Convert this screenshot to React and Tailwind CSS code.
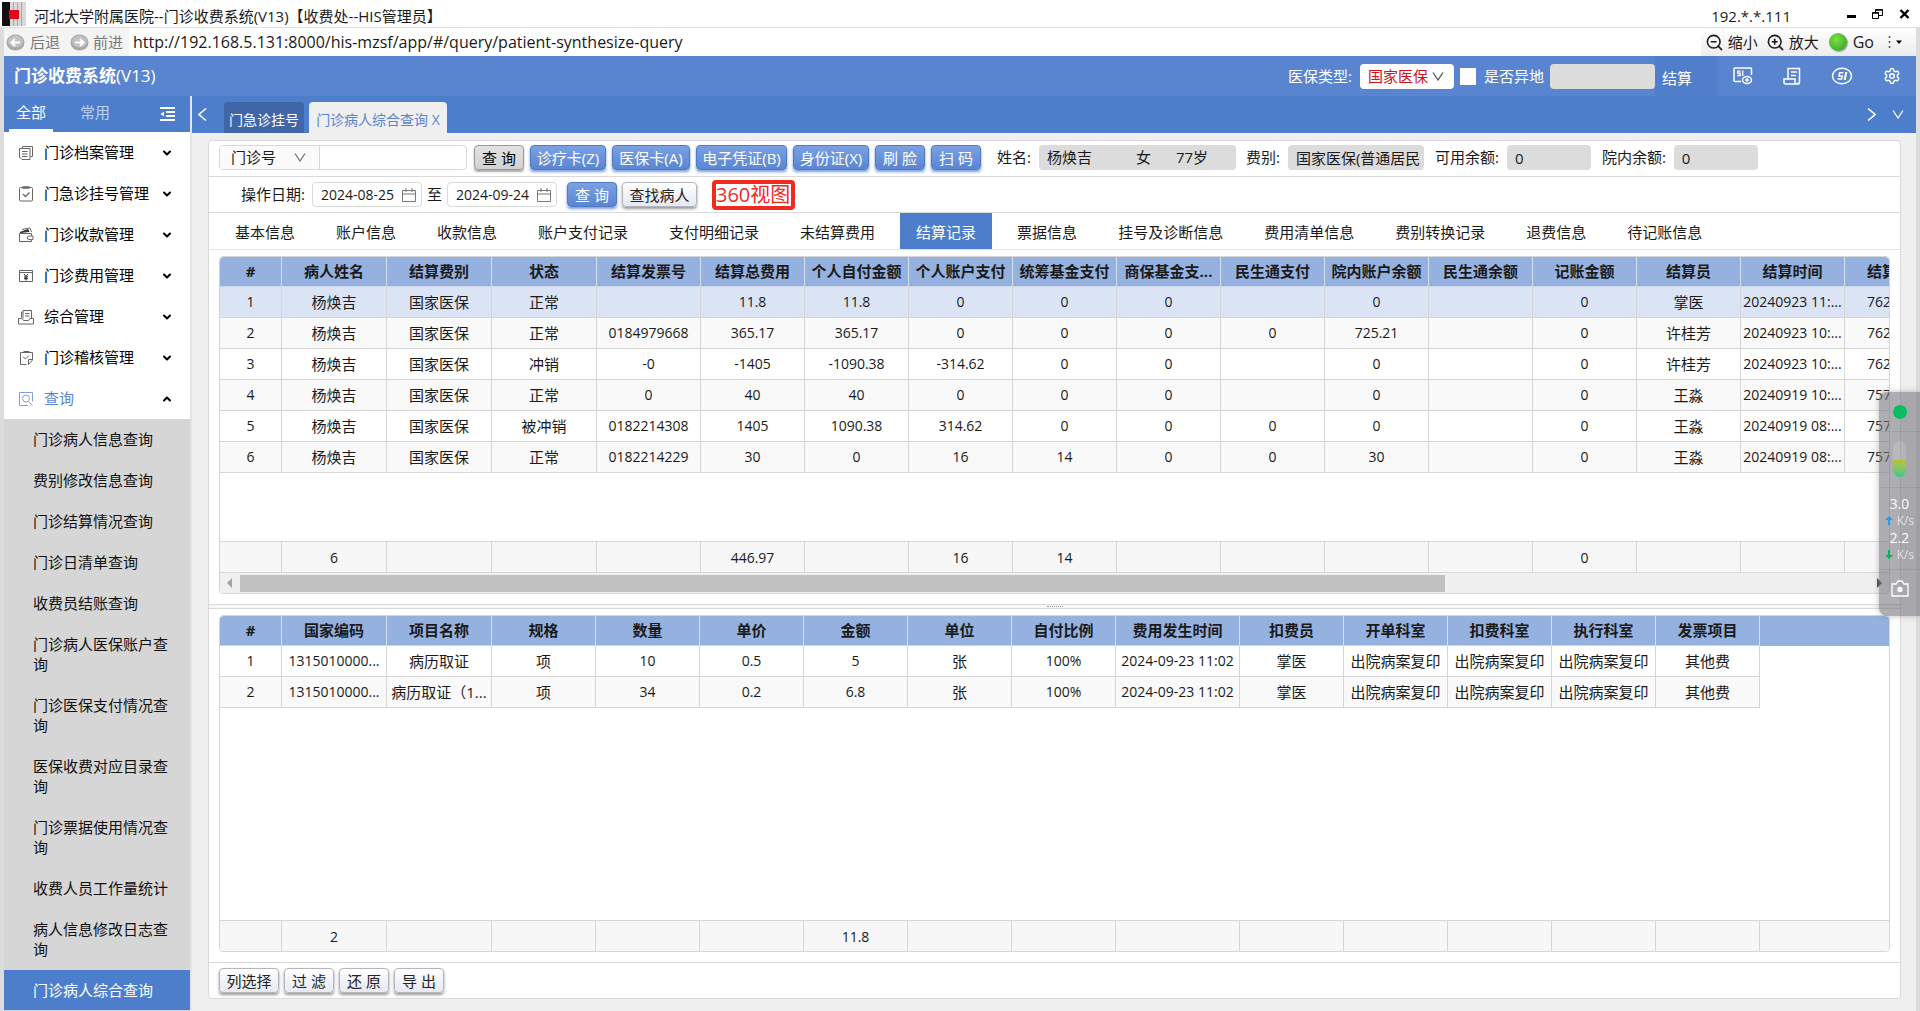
import React, { useState } from 'react';
import clsx from 'clsx';
import { ChevronDown, ChevronUp, Settings, ZoomIn, ZoomOut } from 'lucide-react';

const MENU = [
    { label: '门诊档案管理', icon: DocsIcon },
    { label: '门急诊挂号管理', icon: ClipboardIcon },
    { label: '门诊收款管理', icon: WalletIcon },
    { label: '门诊费用管理', icon: FeeIcon },
    { label: '综合管理', icon: TrayIcon },
    { label: '门诊稽核管理', icon: AuditIcon },
    { label: '查询', icon: QueryIcon, open: true },
];

const SUBMENU = [
    '门诊病人信息查询',
    '费别修改信息查询',
    '门诊结算情况查询',
    '门诊日清单查询',
    '收费员结账查询',
    '门诊病人医保账户查询',
    '门诊医保支付情况查询',
    '医保收费对应目录查询',
    '门诊票据使用情况查询',
    '收费人员工作量统计',
    '病人信息修改日志查询',
    '门诊病人综合查询',
];

const TABS = [
    '基本信息', '账户信息', '收款信息', '账户支付记录', '支付明细记录', '未结算费用', '结算记录',
    '票据信息', '挂号及诊断信息', '费用清单信息', '费别转换记录', '退费信息', '待记账信息',
];

const SETTLE_WIDTHS = [62, 105, 105, 105, 104, 104, 104, 104, 104, 104, 104, 104, 104, 104, 104, 104, 104];
const SETTLE_HEAD = [
    '#', '病人姓名', '结算费别', '状态', '结算发票号', '结算总费用', '个人自付金额', '个人账户支付', '统筹基金支付',
    '商保基金支...', '民生通支付', '院内账户余额', '民生通余额', '记账金额', '结算员', '结算时间', '结算',
];
const SETTLE_ROWS = [
    ['1', '杨焕吉', '国家医保', '正常', '', '11.8', '11.8', '0', '0', '0', '', '0', '', '0', '掌医', '20240923 11:...', '762'],
    ['2', '杨焕吉', '国家医保', '正常', '0184979668', '365.17', '365.17', '0', '0', '0', '0', '725.21', '', '0', '许桂芳', '20240923 10:...', '762'],
    ['3', '杨焕吉', '国家医保', '冲销', '-0', '-1405', '-1090.38', '-314.62', '0', '0', '', '0', '', '0', '许桂芳', '20240923 10:...', '762'],
    ['4', '杨焕吉', '国家医保', '正常', '0', '40', '40', '0', '0', '0', '', '0', '', '0', '王淼', '20240919 10:...', '757'],
    ['5', '杨焕吉', '国家医保', '被冲销', '0182214308', '1405', '1090.38', '314.62', '0', '0', '0', '0', '', '0', '王淼', '20240919 08:...', '757'],
    ['6', '杨焕吉', '国家医保', '正常', '0182214229', '30', '0', '16', '14', '0', '0', '30', '', '0', '王淼', '20240919 08:...', '757'],
];
const SETTLE_TOTAL = ['', '6', '', '', '', '446.97', '', '16', '14', '', '', '', '', '0', '', '', ''];

const DETAIL_WIDTHS = [62, 105, 105, 104, 104, 104, 104, 104, 104, 124, 104, 104, 104, 104, 104];
const DETAIL_HEAD = [
    '#', '国家编码', '项目名称', '规格', '数量', '单价', '金额', '单位', '自付比例', '费用发生时间', '扣费员',
    '开单科室', '扣费科室', '执行科室', '发票项目',
];
const DETAIL_ROWS = [
    ['1', '1315010000...', '病历取证', '项', '10', '0.5', '5', '张', '100%', '2024-09-23 11:02', '掌医', '出院病案复印', '出院病案复印', '出院病案复印', '其他费'],
    ['2', '1315010000...', '病历取证（1...', '项', '34', '0.2', '6.8', '张', '100%', '2024-09-23 11:02', '掌医', '出院病案复印', '出院病案复印', '出院病案复印', '其他费'],
];
const DETAIL_TOTAL = ['', '2', '', '', '', '', '11.8', '', '', '', '', '', '', '', ''];

/* ---------- sidebar icons ---------- */

function MenuSvg({ children }) {
    return (
        <svg width="16" height="16" viewBox="0 0 16 16" fill="none" stroke="currentColor" strokeWidth="1" className="shrink-0">
            {children}
        </svg>
    );
}

function DocsIcon() {
    return (
        <MenuSvg>
            <path d="M4.5 3.5v-2h10v10h-2M1.5 3.5h10.500v11h-8l-2.500-2.500zM4 6.500h5.500M4 9h5.500M4 11.500h5.500" />
        </MenuSvg>
    );
}

function ClipboardIcon() {
    return (
        <MenuSvg>
            <rect x="1.500" y="1.500" width="13" height="13.500" rx="1" />
            <path d="M4.500 1.500h7" strokeWidth="2.500" />
            <path d="M5 8l2.500 2.500L11.500 6.500" strokeWidth="1.300" />
        </MenuSvg>
    );
}

function WalletIcon() {
    return (
        <MenuSvg>
            <path d="M2 5.500L10 2.500l1 2z" fill="#333" stroke="#333" />
            <path d="M4 2.500l8-1.500 1.500 4" />
            <path d="M1.500 6.500h12v2.500h-2.500a1.500 1.500 0 0 0 0 3.500h2.500v2h-12z" />
            <path d="M13.500 9h1.500v3.500h-1.500" />
        </MenuSvg>
    );
}

function FeeIcon() {
    return (
        <MenuSvg>
            <path d="M1.500 2.500h13v11h-13zM1.500 4.500h13" />
            <path d="M6 6l2 2.500L10 6M8 8.500v4M6 9h4M6 10.700h4" stroke="#222" />
        </MenuSvg>
    );
}

function TrayIcon() {
    return (
        <MenuSvg>
            <path d="M3.500 8.500v-5.500h1.500M5 9.500v-8h8.500v8M7 4.500h4.500M7 7h4.500M.5 9.500h3.500l1.500 2h5l1.500-2h3.500v5.500h-15z" />
        </MenuSvg>
    );
}

function AuditIcon() {
    return (
        <MenuSvg>
            <path d="M8.500 14.500h-6v-12h12v7.500l-4 4.500M14.500 9.500h-4v5" />
            <path d="M5.500 2h6" strokeWidth="2" />
            <path d="M5 6.500l2.500 2.500L11 5.500" />
        </MenuSvg>
    );
}

function QueryIcon() {
    return (
        <MenuSvg>
            <path d="M10 14.500h-8.500v-13h13v9" />
            <circle cx="8" cy="7.500" r="3.500" />
            <path d="M10.500 10.500l4 4" />
        </MenuSvg>
    );
}

/* ---------- top bar icons ---------- */

function CardEyeIcon() {
    return (
        <svg width="20" height="18" viewBox="0 0 20 18" fill="none" stroke="currentColor" strokeWidth="1.500">
            <path d="M8 14.500H2a1 1 0 0 1-1-1V2a1 1 0 0 1 1-1h15.500a1 1 0 0 1 1 1v6" />
            <path d="M7.500 4.200H4.700v2h2.500v2.300H4.200M9.700 3.500v5.500" strokeWidth="1.300" />
            <ellipse cx="14" cy="13" rx="4.500" ry="3.500" />
            <circle cx="14" cy="13" r="1" />
        </svg>
    );
}

function ReceiptIcon() {
    return (
        <svg width="18" height="18" viewBox="0 0 18 18" fill="none" stroke="currentColor" strokeWidth="1.500">
            <path d="M5 11.500V1.500h11.500v14a1.500 1.500 0 0 1-1.500 1.500H2.500a1.500 1.500 0 0 1-1.500-1.500v-3.500h11v3.500a1.500 1.500 0 0 0 3 0M8 5h6M8 8.500h5" />
        </svg>
    );
}

function SiIcon() {
    return (
        <svg width="22" height="18" viewBox="0 0 22 18" fill="none" stroke="currentColor" strokeWidth="1.500">
            <ellipse cx="11" cy="9" rx="9.500" ry="7.800" />
            <path d="M12.300 5.800H8.700L8 8.900h3.300l-.7 3.200H6.500" />
            <path d="M15.300 5l-1.600 8" strokeWidth="2" />
        </svg>
    );
}

function Caret({ className }) {
    return (
        <svg width="12" height="9" viewBox="0 0 12 9" fill="none" stroke="currentColor" strokeWidth="1.300" className={className}>
            <path d="M1 .5l5 7.500L11 .5" />
        </svg>
    );
}

function SideArrow({ left }) {
    return (
        <svg width="9" height="13" viewBox="0 0 9 13" fill="none" stroke="currentColor" strokeWidth="1.500">
            <path d={left ? 'M8 .5L1 6.500l7 6' : 'M1 .5l7 6-7 6'} />
        </svg>
    );
}

function NavArrow({ back }) {
    return (
        <svg width="19" height="17" viewBox="0 0 19 17" className="shrink-0">
            <ellipse cx="9.500" cy="8.500" rx="9" ry="8" fill="#a8a8a8" />
            <ellipse cx="9.500" cy="7.500" rx="7.500" ry="6" fill="#c2c2c2" />
            <path
                d={back ? 'M14 8.500H5.500M9 5L5.500 8.500L9 12' : 'M5 8.500h8.500M10 5l3.500 3.500L10 12'}
                fill="none"
                stroke="#fff"
                strokeWidth="2"
            />
        </svg>
    );
}

function CalendarIcon() {
    return (
        <svg width="14" height="14" viewBox="0 0 14 14" fill="none" stroke="#777" strokeWidth="1" className="shrink-0">
            <path d="M.5 2.500h13v11H.5zM.5 6h13M4 0v4M10 0v4" />
        </svg>
    );
}

/* ---------- window chrome ---------- */

function TitleBar() {
    return (
        <div className="flex h-7 items-center border-b border-[#e0e0e0] pr-2.5 pl-0.5">
            <svg width="24" height="24" viewBox="0 0 24 24" className="shrink-0">
                <rect width="24" height="24" fill="#d8d8d8" />
                <rect width="8" height="24" fill="#111" />
                <path d="M11.500 0v24M15.500 0v24M19.500 0v24" stroke="#a8a8a8" />
                <rect x="7" y="8" width="10" height="9" fill="#e0061c" />
            </svg>
            <h1 className="ml-2 pt-1 text-[15px] leading-5">河北大学附属医院--门诊收费系统(V13)【收费处--HIS管理员】</h1>
            <span className="mr-14 ml-auto pt-1 text-[15px] leading-5">192.*.*.111</span>
            <div className="flex items-center gap-4">
                <button type="button" aria-label="最小化">
                    <svg width="9" height="10" viewBox="0 0 9 10"><path d="M0 7.500h9" stroke="#000" strokeWidth="3" /></svg>
                </button>
                <button type="button" aria-label="还原窗口">
                    <svg width="11" height="10" viewBox="0 0 11 10" fill="none" stroke="#000">
                        <path d="M.5 3.500h6v6h-6zM3.500 3V.5h7v6H7" />
                        <path d="M.5 4h6M3.500 1h7" strokeWidth="1.500" />
                    </svg>
                </button>
                <button type="button" aria-label="关闭">
                    <svg width="11" height="10" viewBox="0 0 11 10"><path d="M1.500 1l8 8M9.500 1l-8 8" stroke="#000" strokeWidth="2.400" /></svg>
                </button>
            </div>
        </div>
    );
}

function AddressBar() {
    return (
        <div className="flex h-7 items-center text-[15px] leading-5">
            <div className="flex h-full items-center bg-[#f4f4f4] pr-1.5 pl-0.5 text-[#777]">
                <button type="button" className="flex items-center gap-[5px]"><NavArrow back />后退</button>
                <button type="button" className="ml-2.5 flex items-center gap-1"><NavArrow />前进</button>
            </div>
            <span className="pl-1 text-base leading-5">http://192.168.5.131:8000/his-mzsf/app/#/query/patient-synthesize-query</span>
            <div className="ml-auto flex h-full items-center bg-linear-to-b from-white to-[#ececec] pr-3 pl-1">
                <button type="button" className="flex items-center gap-1"><ZoomOut size={19} />缩小</button>
                <button type="button" className="ml-2 flex items-center gap-1"><ZoomIn size={19} />放大</button>
                <button type="button" className="ml-2.5 flex items-center gap-1.5">
                    <span className="size-[18px] rounded-full bg-radial-[at_40%_35%] from-[#7be04a] to-[#2c9a1c] shadow-[1px_1px_1px_#999]" />
                    <span className="text-base leading-5">Go</span>
                </button>
                <svg width="18" height="12" viewBox="0 0 18 12" className="ml-3">
                    <path d="M3.500 0v2M3.500 5v2M3.500 10v2" stroke="#555" strokeWidth="1.500" />
                    <path d="M10 4.500h6l-3 3.500z" />
                </svg>
            </div>
        </div>
    );
}

function AppHeader() {
    return (
        <header className="flex h-10 items-center bg-[#5985d0] pl-2.5 text-[15px] text-white">
            <h2 className="text-[17px] font-bold">门诊收费系统<span className="font-medium">(V13)</span></h2>
            <div className="ml-auto flex h-full items-center">
                <label htmlFor="insurance" className="mr-2">医保类型:</label>
                <span className="relative flex items-center">
                    <select id="insurance" className="h-[25px] w-[94px] appearance-none rounded bg-white pl-2 text-[15px] text-[#d0121b]">
                        <option>国家医保</option>
                    </select>
                    <Caret className="pointer-events-none absolute right-2.5 text-[#555]" />
                </span>
                <input id="remote" type="checkbox" className="ml-1.5 h-[17px] w-4 appearance-none bg-white" />
                <label htmlFor="remote" className="ml-2">是否异地</label>
                <input type="text" aria-label="异地编号" readOnly className="ml-1.5 h-[25px] w-[105px] rounded bg-[#dcdcdc]" />
                <button type="button" className="h-full w-[62px] bg-[#507eca] pt-1 pl-[7px] text-left">结算</button>
                <div className="flex items-center gap-[30px] pr-[15px] pl-4">
                    <button type="button" aria-label="医保卡"><CardEyeIcon /></button>
                    <button type="button" aria-label="票据"><ReceiptIcon /></button>
                    <button type="button" aria-label="医保"><SiIcon /></button>
                    <button type="button" aria-label="设置"><Settings size={18} strokeWidth={2} /></button>
                </div>
            </div>
        </header>
    );
}

/* ---------- sidebar ---------- */

function Sidebar() {
    const [active, setActive] = useState('门诊病人综合查询');

    return (
        <nav className="flex w-[188px] shrink-0 flex-col border-r-2 border-[#e4e4e4] bg-white text-[15px]">
            <div className="flex h-9 items-stretch bg-[#4d7ecc] text-white">
                <button type="button" className="ml-[5px] w-11 border-b-3 border-white">全部</button>
                <button type="button" className="ml-5 w-11 border-b-3 border-transparent text-[#bcd2f5]">常用</button>
                <button type="button" aria-label="收起菜单" className="mr-3.5 ml-auto">
                    <svg width="16" height="14" viewBox="0 0 16 14" fill="none" stroke="#fff" strokeWidth="2">
                        <path d="M0 1h15M6 5h9M6 9h9M0 13h15" />
                        <path d="M4 4.500v5L.5 7z" fill="#fff" stroke="none" />
                    </svg>
                </button>
            </div>

            <ul>
                {MENU.map(({ label, icon: Icon, open }) => (
                    <li key={label}>
                        <button type="button" className={clsx('flex h-[41px] w-full items-center pr-[17px] pl-3.5', open ? 'text-[#5b84cf]' : 'text-black')}>
                            <span className={open ? 'text-[#7f9fdc]' : 'text-[#666]'}><Icon /></span>
                            <span className="ml-2.5">{label}</span>
                            {open
                                ? <ChevronUp size={12} strokeWidth={4} className="ml-auto text-black" />
                                : <ChevronDown size={12} strokeWidth={4} className="ml-auto text-black" />}
                        </button>
                    </li>
                ))}
            </ul>

            <ul className="flex flex-1 flex-col gap-px bg-[#d6d6d6]">
                {SUBMENU.map((label) => (
                    <li key={label}>
                        <a
                            href="#"
                            onClick={() => setActive(label)}
                            className={clsx('block py-2.5 pr-5 pl-[29px] leading-5', active === label ? 'bg-[#4d7ecc] text-white' : 'text-[#111]')}
                        >
                            {label}
                        </a>
                    </li>
                ))}
            </ul>
        </nav>
    );
}

/* ---------- form bits ---------- */

const BUTTON_TONE = {
    blue: 'border-[#4f7ac4] from-[#7ba1e2] to-[#5a85d2] text-white shadow-[0_2px_3px_#7d9cd6]',
    gray: 'border-[#999] from-[#e2e2e2] to-[#d2d2d2] text-black shadow-[0_2px_2px_#aaa]',
    light: 'border-[#b4b4bc] from-white to-[#e6e8f2] text-[#222] shadow-[0_2px_3px_#999]',
};

function Button({ tone = 'blue', className, children }) {
    return (
        <button
            type="button"
            className={clsx('h-[25px] shrink-0 rounded border bg-linear-to-b text-center text-[15px] leading-5 whitespace-nowrap', BUTTON_TONE[tone], className)}
        >
            {children}
        </button>
    );
}

function ReadOnly({ id, label, value, className }) {
    return (
        <div className="flex shrink-0 items-center gap-2">
            <label htmlFor={id}>{label}:</label>
            <input id={id} type="text" readOnly value={value} className={clsx('h-[25px] rounded bg-[#dcdcdc] pl-2 text-[15px]', className)} />
        </div>
    );
}

function DateBox({ id, value }) {
    return (
        <span className="flex h-[25px] w-[110px] items-center rounded border border-[#d9d9d9] pr-[5px] pl-2">
            <input id={id} aria-label={id} type="text" defaultValue={value} className="w-0 flex-1 text-sm" />
            <CalendarIcon />
        </span>
    );
}

function SearchRows() {
    return (
        <>
            <div className="flex h-9 items-center overflow-hidden border-b border-[#d9d9d9] pb-0.5 pl-2.5">
                <div className="relative flex h-[25px] w-[248px] shrink-0 items-center overflow-hidden rounded border border-[#d9d9d9]">
                    <select aria-label="查询方式" className="h-full w-[100px] shrink-0 appearance-none border-r border-[#d9d9d9] bg-[#fafafa] pl-[11px]">
                        <option>门诊号</option>
                    </select>
                    <Caret className="pointer-events-none absolute left-[74px] text-[#777]" />
                    <input type="text" aria-label="查询内容" className="h-full w-0 flex-1 px-2" />
                </div>
                <div className="ml-[7px] flex gap-1.5">
                    <Button tone="gray" className="w-[50px]">查 询</Button>
                    <Button className="w-[76px]">诊疗卡(Z)</Button>
                    <Button className="w-[78px]">医保卡(A)</Button>
                    <Button className="w-[91px]">电子凭证(B)</Button>
                    <Button className="w-[76px]">身份证(X)</Button>
                    <Button className="w-[50px]">刷 脸</Button>
                    <Button className="w-[50px]">扫 码</Button>
                </div>
                <div className="ml-4 flex shrink-0 items-center gap-2">
                    <span>姓名:</span>
                    <div className="flex h-[25px] w-[197px] items-center rounded bg-[#dcdcdc] pl-2">
                        <span className="w-[89px]">杨焕吉</span>
                        <span className="w-10">女</span>
                        <span>77岁</span>
                    </div>
                </div>
                <div className="ml-2.5 flex gap-[11px]">
                    <ReadOnly id="feeType" label="费别" value="国家医保(普通居民" className="w-[136px]" />
                    <ReadOnly id="available" label="可用余额" value="0" className="w-[84px]" />
                    <ReadOnly id="inner" label="院内余额" value="0" className="w-[84px]" />
                </div>
            </div>

            <div className="flex h-9 items-center border-b border-[#d9d9d9] pl-8">
                <label htmlFor="开始日期" className="mr-[7px]">操作日期:</label>
                <DateBox id="开始日期" value="2024-08-25" />
                <span className="mx-[5px]">至</span>
                <DateBox id="结束日期" value="2024-09-24" />
                <Button className="ml-2.5 w-[50px]">查 询</Button>
                <Button tone="light" className="ml-[5px] w-[75px]">查找病人</Button>
                <a href="#" className="ml-[15px] flex h-[30px] w-[83px] items-center rounded border-4 border-[#f02a1d] text-xl leading-5 text-[#f02a1d]">
                    360视图
                </a>
            </div>
        </>
    );
}

function RecordTabs() {
    const [current, setCurrent] = useState('结算记录');

    return (
        <div className="flex h-[37px] gap-[9px] overflow-hidden border-b border-[#e2e2e2] pl-2.5">
            {TABS.map((tab) => (
                <button
                    key={tab}
                    type="button"
                    onClick={() => setCurrent(tab)}
                    className={clsx('h-full shrink-0 px-4 pt-0.5 whitespace-nowrap', current === tab && 'bg-[#4d7ecc] text-white')}
                >
                    {tab}
                </button>
            ))}
        </div>
    );
}

/* ---------- tables ---------- */

function Cols({ widths }) {
    return (
        <colgroup>
            {widths.map((w, i) => <col key={i} style={{ width: w }} />)}
        </colgroup>
    );
}

// Last column of the settlement grid runs past the viewport, so it is left aligned.
function cellAlign(i) {
    return i === 16 ? 'pl-[22px] text-left' : 'text-center';
}

function Grid({ widths, head, rows, selected, filler }) {
    const total = widths.reduce((a, b) => a + b, 0);

    return (
        <div className="overflow-hidden rounded-t bg-[#95b1df]">
            <table className="table-fixed border-separate border-spacing-0" style={{ width: total }}>
                <Cols widths={widths} />
                <thead>
                    <tr className="h-[30px]">
                        {head.map((h, i) => (
                            <th key={i} className={clsx('overflow-hidden border-r border-b border-[#d5dff0] border-b-[#c9d4e8] pb-0.5 text-[15px] leading-5 font-bold whitespace-nowrap', cellAlign(i))}>
                                {h}
                            </th>
                        ))}
                    </tr>
                </thead>
            </table>
            <div className={clsx('bg-white', filler)}>
                <table className="table-fixed border-separate border-spacing-0" style={{ width: total }}>
                    <Cols widths={widths} />
                    <tbody>
                        {rows.map((row, r) => (
                            <tr key={r} className={clsx('h-[31px]', selected === r ? 'bg-[#dae4f5]' : r % 2 ? 'bg-[#f9f9f9]' : 'bg-white')}>
                                {row.map((cell, i) => (
                                    <td
                                        key={i}
                                        className={clsx(
                                            'overflow-hidden border-r border-b border-[#d6d6d6] leading-5 whitespace-nowrap',
                                            /^[\d\s.:%-]*$/.test(cell) ? 'text-sm leading-5' : 'text-[15px]',
                                            cellAlign(i),
                                        )}
                                    >
                                        {cell}
                                    </td>
                                ))}
                            </tr>
                        ))}
                    </tbody>
                </table>
            </div>
        </div>
    );
}

function TotalRow({ widths, values }) {
    return (
        <div className="overflow-hidden border-t border-[#d6d6d6] bg-[#f7f7f7]">
            <table className="table-fixed border-separate border-spacing-0" style={{ width: widths.reduce((a, b) => a + b, 0) }}>
                <Cols widths={widths} />
                <tbody>
                    <tr className="h-[30px]">
                        {values.map((v, i) => (
                            <td key={i} className="border-r border-[#d6d6d6] pt-0.5 text-center text-sm leading-5">{v}</td>
                        ))}
                    </tr>
                </tbody>
            </table>
        </div>
    );
}

function ScrollBar() {
    return (
        <div className="flex h-[21px] items-center border-t border-[#d6d6d6] bg-[#f0f0f0]">
            <svg width="20" height="12" viewBox="0 0 20 12" className="shrink-0"><path d="M12 1v10L7 6z" fill="#a3a3a3" /></svg>
            <div className="flex h-[17px] flex-1">
                <div className="w-[74%] bg-[#c1c1c1]" />
            </div>
            <svg width="20" height="12" viewBox="0 0 20 12" className="shrink-0"><path d="M8 1v10l5-5z" fill="#444" /></svg>
        </div>
    );
}

/* ---------- floating network monitor ---------- */

function NetMonitor() {
    return (
        <aside className="fixed top-[392px] right-0 flex h-[224px] w-[41px] flex-col items-center rounded-l-lg bg-[#78787f]/60 text-white shadow-[0_0_6px_#8888]">
            <div className="flex h-10 w-full items-center justify-center border-b border-[#0001]">
                <span className="size-3.5 rounded-full bg-[#06bf63]" />
            </div>
            <div className="flex h-14 w-full items-end justify-center border-b border-[#0001] pb-2.5">
                <span className="flex h-9 w-[13px] items-end overflow-hidden rounded-full bg-[#fff2]">
                    <span className="h-[17px] w-full bg-linear-to-b from-[#b5c425] to-[#2fc88a]" />
                </span>
            </div>
            <div className="flex h-[82px] w-full flex-col items-center justify-center border-b border-[#0001] text-xs">
                <span className="text-sm leading-[17px]">3.0</span>
                <span className="flex items-center gap-1 leading-[17px] text-[#e2e2e2]">
                    <svg width="8" height="9" viewBox="0 0 8 9"><path d="M4 0l4 4H5v5H3V4H0z" fill="#1f9df0" /></svg>
                    K/s
                </span>
                <span className="text-sm leading-[17px]">2.2</span>
                <span className="flex items-center gap-1 leading-[17px] text-[#e2e2e2]">
                    <svg width="8" height="9" viewBox="0 0 8 9"><path d="M4 9l4-4H5V0H3v5H0z" fill="#08b35c" /></svg>
                    K/s
                </span>
            </div>
            <button type="button" aria-label="截图" className="mt-2.5">
                <svg width="18" height="17" viewBox="0 0 18 17" fill="none" stroke="#fff" strokeWidth="1.300">
                    <path d="M1 4h4l2-3h4l2 3h4v12H1z" />
                    <circle cx="9" cy="9.500" r="2" fill="#fff" />
                </svg>
            </button>
        </aside>
    );
}

export default function App() {
    return (
        <div className="flex min-h-screen flex-col bg-white font-['Open_Sans','Noto_Sans_CJK_SC',sans-serif] text-[15px] text-[#1a1a1a]">
            <TitleBar />
            <div className="flex flex-1 flex-col border-r-4 border-l-4 border-[#dcdcdc] bg-[#efefef]">
                <div className="bg-white"><AddressBar /></div>
                <AppHeader />
                <div className="flex flex-1">
                    <Sidebar />
                    <div className="flex min-w-0 flex-1 flex-col">
                        <div className="flex h-[37px] items-end bg-[#4d7ecc] text-white">
                            <button type="button" aria-label="向左" className="mb-3 ml-1.5"><SideArrow left /></button>
                            <button type="button" className="ml-[17px] h-[31px] w-20 rounded-t bg-[#3f66a8] pt-1 text-sm">门急诊挂号</button>
                            <button type="button" className="ml-[5px] h-[31px] w-[138px] rounded-t bg-[#efefef] pt-1 text-sm text-[#5b84cf]">门诊病人综合查询 X</button>
                            <button type="button" aria-label="向右" className="mb-3 ml-auto"><SideArrow /></button>
                            <button type="button" aria-label="更多" className="mr-3 mb-3.5 ml-4"><Caret /></button>
                        </div>

                        <main className="mt-[7px] mr-[15px] mb-3 ml-4 flex flex-1 flex-col rounded border border-[#d9d9d9] bg-white">
                            <SearchRows />
                            <RecordTabs />

                            <section className="mx-2.5 mt-1.5 overflow-hidden rounded border border-[#d6d6d6]">
                                <Grid widths={SETTLE_WIDTHS} head={SETTLE_HEAD} rows={SETTLE_ROWS} selected={0} filler="pb-[68px]" />
                                <TotalRow widths={SETTLE_WIDTHS} values={SETTLE_TOTAL} />
                                <ScrollBar />
                            </section>

                            <div className="mt-2.5 flex h-[5px] items-center justify-center border-y border-[#d9d9d9] bg-[#f7f7f7]">
                                <span className="w-4 border-t border-dotted border-[#999]" />
                            </div>

                            <section className="mx-2.5 mt-1.5 mb-2.5 flex flex-1 flex-col overflow-hidden rounded border border-[#d6d6d6]">
                                <Grid widths={DETAIL_WIDTHS} head={DETAIL_HEAD} rows={DETAIL_ROWS} />
                                <div className="mt-auto">
                                    <TotalRow widths={DETAIL_WIDTHS} values={DETAIL_TOTAL} />
                                </div>
                            </section>

                            <div className="flex h-9 items-center gap-[5px] border-t border-[#d9d9d9] pl-2.5">
                                <Button tone="light" className="w-[60px]">列选择</Button>
                                <Button tone="light" className="w-[50px]">过 滤</Button>
                                <Button tone="light" className="w-[50px]">还 原</Button>
                                <Button tone="light" className="w-[50px]">导 出</Button>
                            </div>
                        </main>
                    </div>
                </div>
            </div>
            <NetMonitor />
        </div>
    );
}
